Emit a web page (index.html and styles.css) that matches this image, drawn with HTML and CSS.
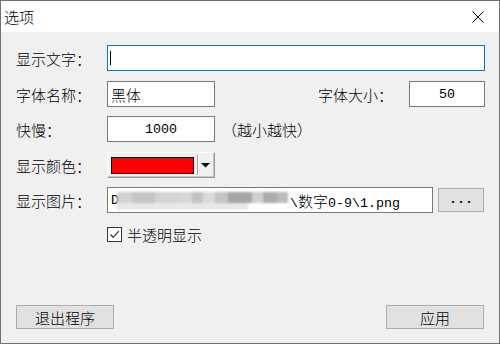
FILE: index.html
```html
<!DOCTYPE html>
<html lang="zh-CN">
<head>
<meta charset="utf-8">
<title>选项</title>
<link rel="stylesheet" href="styles.css">
</head>
<body>
<div class="window">
  <div class="titlebar">
    <span class="title">选项</span>
    <svg class="close" viewBox="0 0 12 12" width="12" height="12"><path d="M0.5 0.5 L11.5 11.5 M11.5 0.5 L0.5 11.5" stroke="#000" stroke-width="1" fill="none"/></svg>
  </div>
  <div class="content">
    <div class="row">
      <span class="lbl">显示文字：</span>
      <div class="field wide"><span class="caret"></span></div>
    </div>
    <div class="row gap10">
      <span class="lbl">字体名称：</span>
      <div class="field short"><span class="cjk">黑体</span></div>
      <span class="lbl lbl2">字体大小：</span>
      <div class="field size center">50</div>
    </div>
    <div class="row">
      <span class="lbl">快慢：</span>
      <div class="field short center">1000</div>
      <span class="hint">（越小越快）</span>
    </div>
    <div class="row gap10">
      <span class="lbl">显示颜色：</span>
      <div class="combo">
        <span class="swatch"></span>
        <span class="sep"></span>
        <svg class="arrow" viewBox="0 0 9 5" width="9" height="5"><polygon points="0,0 9,0 4.5,4.5" fill="#000"/></svg>
      </div>
    </div>
    <div class="row">
      <span class="lbl">显示图片：</span>
      <div class="field path"><span>D</span><span class="redact"></span><span class="tail">\<span class="cjk">数字</span>0-9\1.png</span></div>
      <button class="btn browse">...</button>
    </div>
    <div class="check-row">
      <span class="checkbox"><svg viewBox="0 0 13 13" width="13" height="13"><polyline points="2.5,6.5 5.2,9.3 10.8,3.2" fill="none" stroke="#333" stroke-width="1.2"/></svg></span>
      <span>半透明显示</span>
    </div>
    <div class="actions">
      <button class="btn action">退出程序</button>
      <button class="btn action">应用</button>
    </div>
  </div>
</div>
</body>
</html>
```

FILE: styles.css
```css
html, body {
  margin: 0;
  padding: 0;
  background: #fff;
}

.window {
  width: 500px;
  height: 344px;
  box-sizing: border-box;
  border: 1px solid #707070;
  display: flex;
  flex-direction: column;
  font-family: "Noto Sans CJK SC", sans-serif;
  font-weight: 300;
  font-size: 15px;
  color: #000;
}

.titlebar {
  height: 31px;
  flex: none;
  background: #fff;
  display: flex;
  align-items: center;
  justify-content: space-between;
  padding: 0 15px 0 3px;
}

.title {
  line-height: 1;
}

.close {
  display: block;
}

.content {
  flex: 1;
  background: #f0f0f0;
  padding: 13px 14px 14px 15px;
  display: flex;
  flex-direction: column;
}

.row {
  display: flex;
  align-items: center;
  height: 26px;
  flex: none;
}

.row + .row {
  margin-top: 9px;
}

.row.gap10 {
  margin-top: 10px;
}

.lbl {
  width: 91px;
  flex: none;
  white-space: nowrap;
  line-height: 1;
}

.lbl2 {
  margin-left: 103px;
}

.hint {
  margin-left: 7px;
  line-height: 1;
  white-space: nowrap;
}

.field {
  box-sizing: border-box;
  height: 26px;
  flex: none;
  border: 1px solid #7a7a7a;
  background: #fff;
  display: flex;
  align-items: center;
  padding-left: 3px;
  font-family: "Liberation Mono", "Noto Sans CJK SC", monospace;
  font-weight: 400;
  font-size: 13.33px;
  white-space: nowrap;
  overflow: hidden;
}

.cjk {
  font-family: "Noto Sans CJK SC", sans-serif;
  font-weight: 300;
  font-size: 15px;
}

.wide {
  width: 378px;
  border-color: #0078d7;
}

.caret {
  width: 1px;
  height: 14px;
  margin-left: -1px;
  background: #000;
}

.short {
  width: 108px;
}

.size {
  width: 76px;
}

.center {
  justify-content: center;
  padding-left: 0;
}

.combo {
  box-sizing: border-box;
  width: 108px;
  height: 26px;
  flex: none;
  display: flex;
  align-items: center;
  padding-left: 3px;
  background: #f0f0f0;
  border: 1px solid;
  border-color: #fdfdfd #9a9a9a #9a9a9a #fdfdfd;
  box-shadow: inset -1px -1px 0 #c4c4c4;
}

.swatch {
  box-sizing: border-box;
  width: 83px;
  height: 17px;
  border: 1px solid #000;
  background: #ff0000;
  flex: none;
}

.sep {
  width: 1px;
  height: 20px;
  margin-left: 3px;
  background: #a0a0a0;
  border-right: 1px solid #fff;
  flex: none;
}

.arrow {
  margin-left: 2px;
  display: block;
}

.path {
  width: 326px;
}

.redact {
  flex: none;
  width: 171px;
  height: 18px;
  margin-left: -2px;
  margin-top: 2px;
  filter: blur(1.2px);
  background-image:
    linear-gradient(to right,
      #d2d2d2 0 15px, #c4c4c4 15px 38px, #d4d4d4 38px 63px, #d8d8d8 63px 75px,
      #c2c2c2 75px 86px, #dadada 86px 98px, #c4c4c4 98px 111px, #a6a6a6 111px 135px,
      #cfcfcf 135px 146px, #acacac 146px 160px, #bcbcbc 160px 171px),
    linear-gradient(#e8e8e8, #e8e8e8);
  background-size: 171px 11px, 131px 7px;
  background-position: 0 0, 0 11px;
  background-repeat: no-repeat;
}

.tail {
  margin-left: 2px;
}

.btn {
  box-sizing: border-box;
  height: 24px;
  border: 1px solid #adadad;
  background: #e1e1e1;
  color: #000;
  padding: 0;
  margin: 0;
  font-family: "Noto Sans CJK SC", sans-serif;
  font-weight: 300;
  font-size: 15px;
  line-height: 1;
}

.browse {
  width: 46px;
  margin-left: 5px;
  font-family: "Liberation Mono", monospace;
  font-weight: 700;
  font-size: 13.33px;
}

.check-row {
  display: flex;
  align-items: center;
  gap: 5px;
  height: 16px;
  margin-top: 13px;
  padding-left: 91px;
  line-height: 1;
}

.checkbox {
  box-sizing: border-box;
  width: 15px;
  height: 15px;
  border: 1px solid #333;
  background: #fff;
  display: flex;
  align-items: center;
  justify-content: center;
}

.checkbox svg {
  display: block;
}

.actions {
  margin-top: auto;
  margin-right: 1px;
  display: flex;
  justify-content: space-between;
}

.action {
  width: 98px;
}
```
